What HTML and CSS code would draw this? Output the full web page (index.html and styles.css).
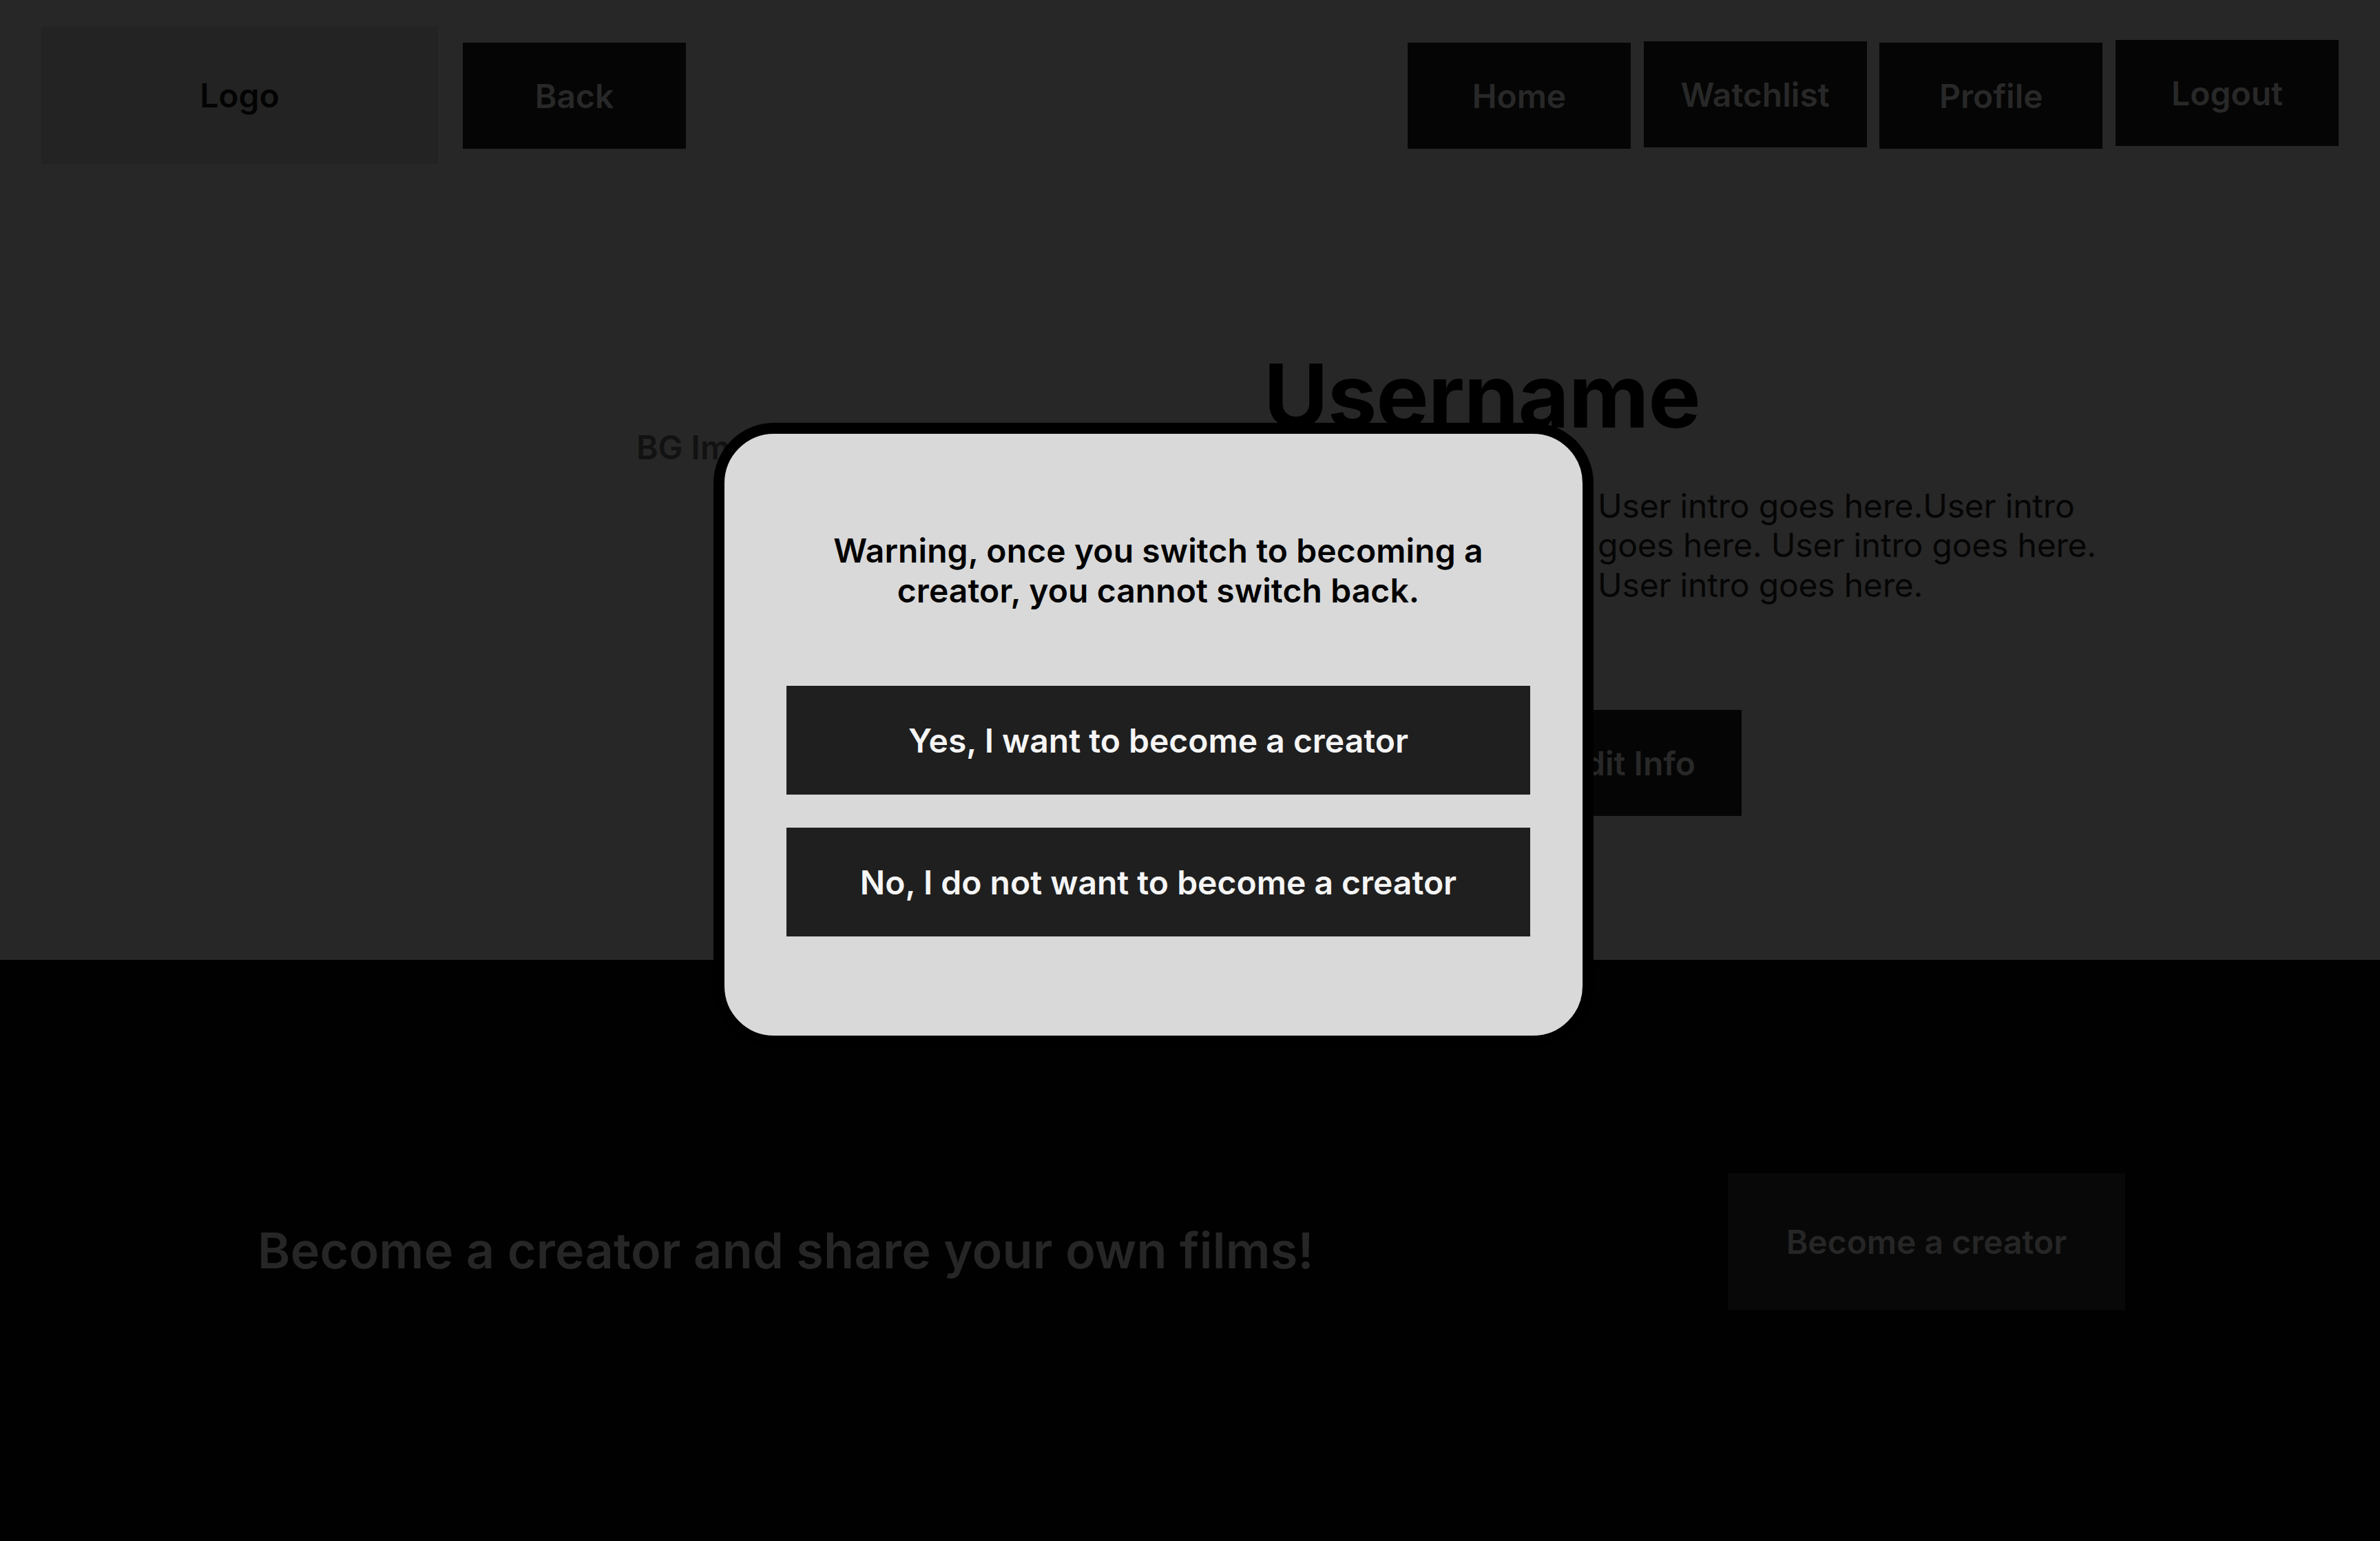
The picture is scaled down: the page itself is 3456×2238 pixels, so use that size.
FILE: index.html
```html
<!DOCTYPE html>
<html lang="en">
<head>
<meta charset="utf-8">
<title>Profile – Become a creator</title>
<link rel="stylesheet" href="styles.css">
</head>
<body>
<div class="page">
  <section class="top">
    <header class="topbar">
      <div class="logo">Logo</div>
      <button class="btn back">Back</button>
      <nav class="nav">
        <button class="btn nav-btn nav-btn--home">Home</button>
        <button class="btn nav-btn nav-btn--watchlist">Watchlist</button>
        <button class="btn nav-btn nav-btn--profile">Profile</button>
        <button class="btn nav-btn nav-btn--logout">Logout</button>
      </nav>
    </header>
    <div class="hero">
      <div class="bg-image">BG Image</div>
      <div class="profile">
        <h1 class="username">Username</h1>
        <p class="intro">User intro goes here.User intro goes here. User intro goes here. User intro goes here.</p>
        <button class="btn edit">Edit Info</button>
      </div>
    </div>
  </section>
  <footer class="cta">
    <p class="cta-text">Become a creator and share your own films!</p>
    <button class="btn cta-btn">Become a creator</button>
  </footer>

  <div class="modal">
    <p class="modal-text">Warning, once you switch to becoming a<br>creator, you cannot switch back.</p>
    <button class="modal-btn">Yes, I want to become a creator</button>
    <button class="modal-btn">No, I do not want to become a creator</button>
  </div>
</div>
</body>
</html>
```

FILE: styles.css
```css
* { box-sizing: border-box; }

html, body {
  margin: 0;
  padding: 0;
  background: #010101;
}

body {
  font-family: Inter, "Noto Sans", sans-serif;
  width: 3456px;
  height: 2238px;
  overflow: hidden;
}

.page {
  position: relative;
  width: 3456px;
  height: 2238px;
}

.btn {
  border: 0;
  margin: 0;
  padding: 0;
  font-family: inherit;
  display: flex;
  align-items: center;
  justify-content: center;
}

/* ---------- top area ---------- */
.top {
  background: #272727;
  height: 1394px;
}

.topbar {
  display: flex;
  align-items: flex-start;
  padding: 38px 60px 0 60px;
}

.logo {
  width: 576px;
  height: 200px;
  background: #232323;
  color: #030303;
  font-size: 48px;
  font-weight: 600;
  display: flex;
  align-items: center;
  justify-content: center;
}

.back {
  margin-left: 36px;
  margin-top: 24px;
  width: 324px;
  height: 154px;
  background: #050505;
  color: #282828;
  font-size: 48px;
  font-weight: 600;
}

.nav {
  margin-left: auto;
  display: flex;
  align-items: flex-start;
  gap: 18.7px;
}

.nav-btn {
  width: 324px;
  height: 154px;
  background: #050505;
  color: #282828;
  font-size: 48px;
  font-weight: 600;
}

.nav-btn--home { margin-top: 24px; }
.nav-btn--watchlist { margin-top: 22px; }
.nav-btn--profile { margin-top: 24px; }
.nav-btn--logout { margin-top: 20px; }

/* ---------- hero ---------- */
.hero {
  display: flex;
  align-items: flex-start;
}

.bg-image {
  margin-left: 375px;
  width: 1320px;
  padding-top: 383px;
  text-align: center;
  color: #121212;
  font-size: 48px;
  font-weight: 600;
  line-height: 1.2;
}

.profile {
  margin-left: 140px;
  padding-top: 260px;
  display: flex;
  flex-direction: column;
  align-items: flex-start;
}

.username {
  margin: 0;
  font-size: 128px;
  font-weight: 700;
  line-height: 1.2;
  color: #000;
  letter-spacing: -1px;
}

.intro {
  margin: 54px 0 0 485px;
  width: 760px;
  font-size: 48px;
  font-weight: 400;
  line-height: 1.2;
  color: #050505;
  letter-spacing: -0.2px;
}

.edit {
  margin-left: 370px;
  margin-top: 153px;
  width: 324px;
  height: 154px;
  background: #050505;
  color: #282828;
  font-size: 48px;
  font-weight: 600;
}

/* ---------- footer CTA ---------- */
.cta {
  height: 844px;
  background: #010101;
  display: flex;
  align-items: flex-start;
  padding: 0 370px 0 374px;
}

.cta-text {
  margin: 379px 0 0 0;
  font-size: 72px;
  font-weight: 600;
  line-height: 1.2;
  color: #262626;
  letter-spacing: 0.2px;
}

.cta-btn {
  margin-left: auto;
  margin-top: 310px;
  width: 577px;
  height: 199px;
  background: #080808;
  color: #262626;
  font-size: 48px;
  font-weight: 600;
}

/* ---------- modal ---------- */
.modal {
  position: absolute;
  left: 1036px;
  top: 614px;
  width: 1278px;
  height: 906px;
  border: 16px solid #000;
  border-radius: 88px;
  background: #d9d9d9;
  padding: 141px 76px 0 90px;
  display: flex;
  flex-direction: column;
  align-items: stretch;
}

.modal-text {
  margin: 0 0 110px 0;
  text-align: center;
  font-size: 48px;
  font-weight: 600;
  line-height: 1.2;
  color: #000;
  letter-spacing: 0.1px;
}

.modal-btn {
  height: 158px;
  border: 0;
  background: #1f1f1f;
  color: #f5f5f5;
  font-family: inherit;
  font-size: 48px;
  font-weight: 600;
  display: flex;
  align-items: center;
  justify-content: center;
}

.modal-btn + .modal-btn {
  margin-top: 48px;
}
```
